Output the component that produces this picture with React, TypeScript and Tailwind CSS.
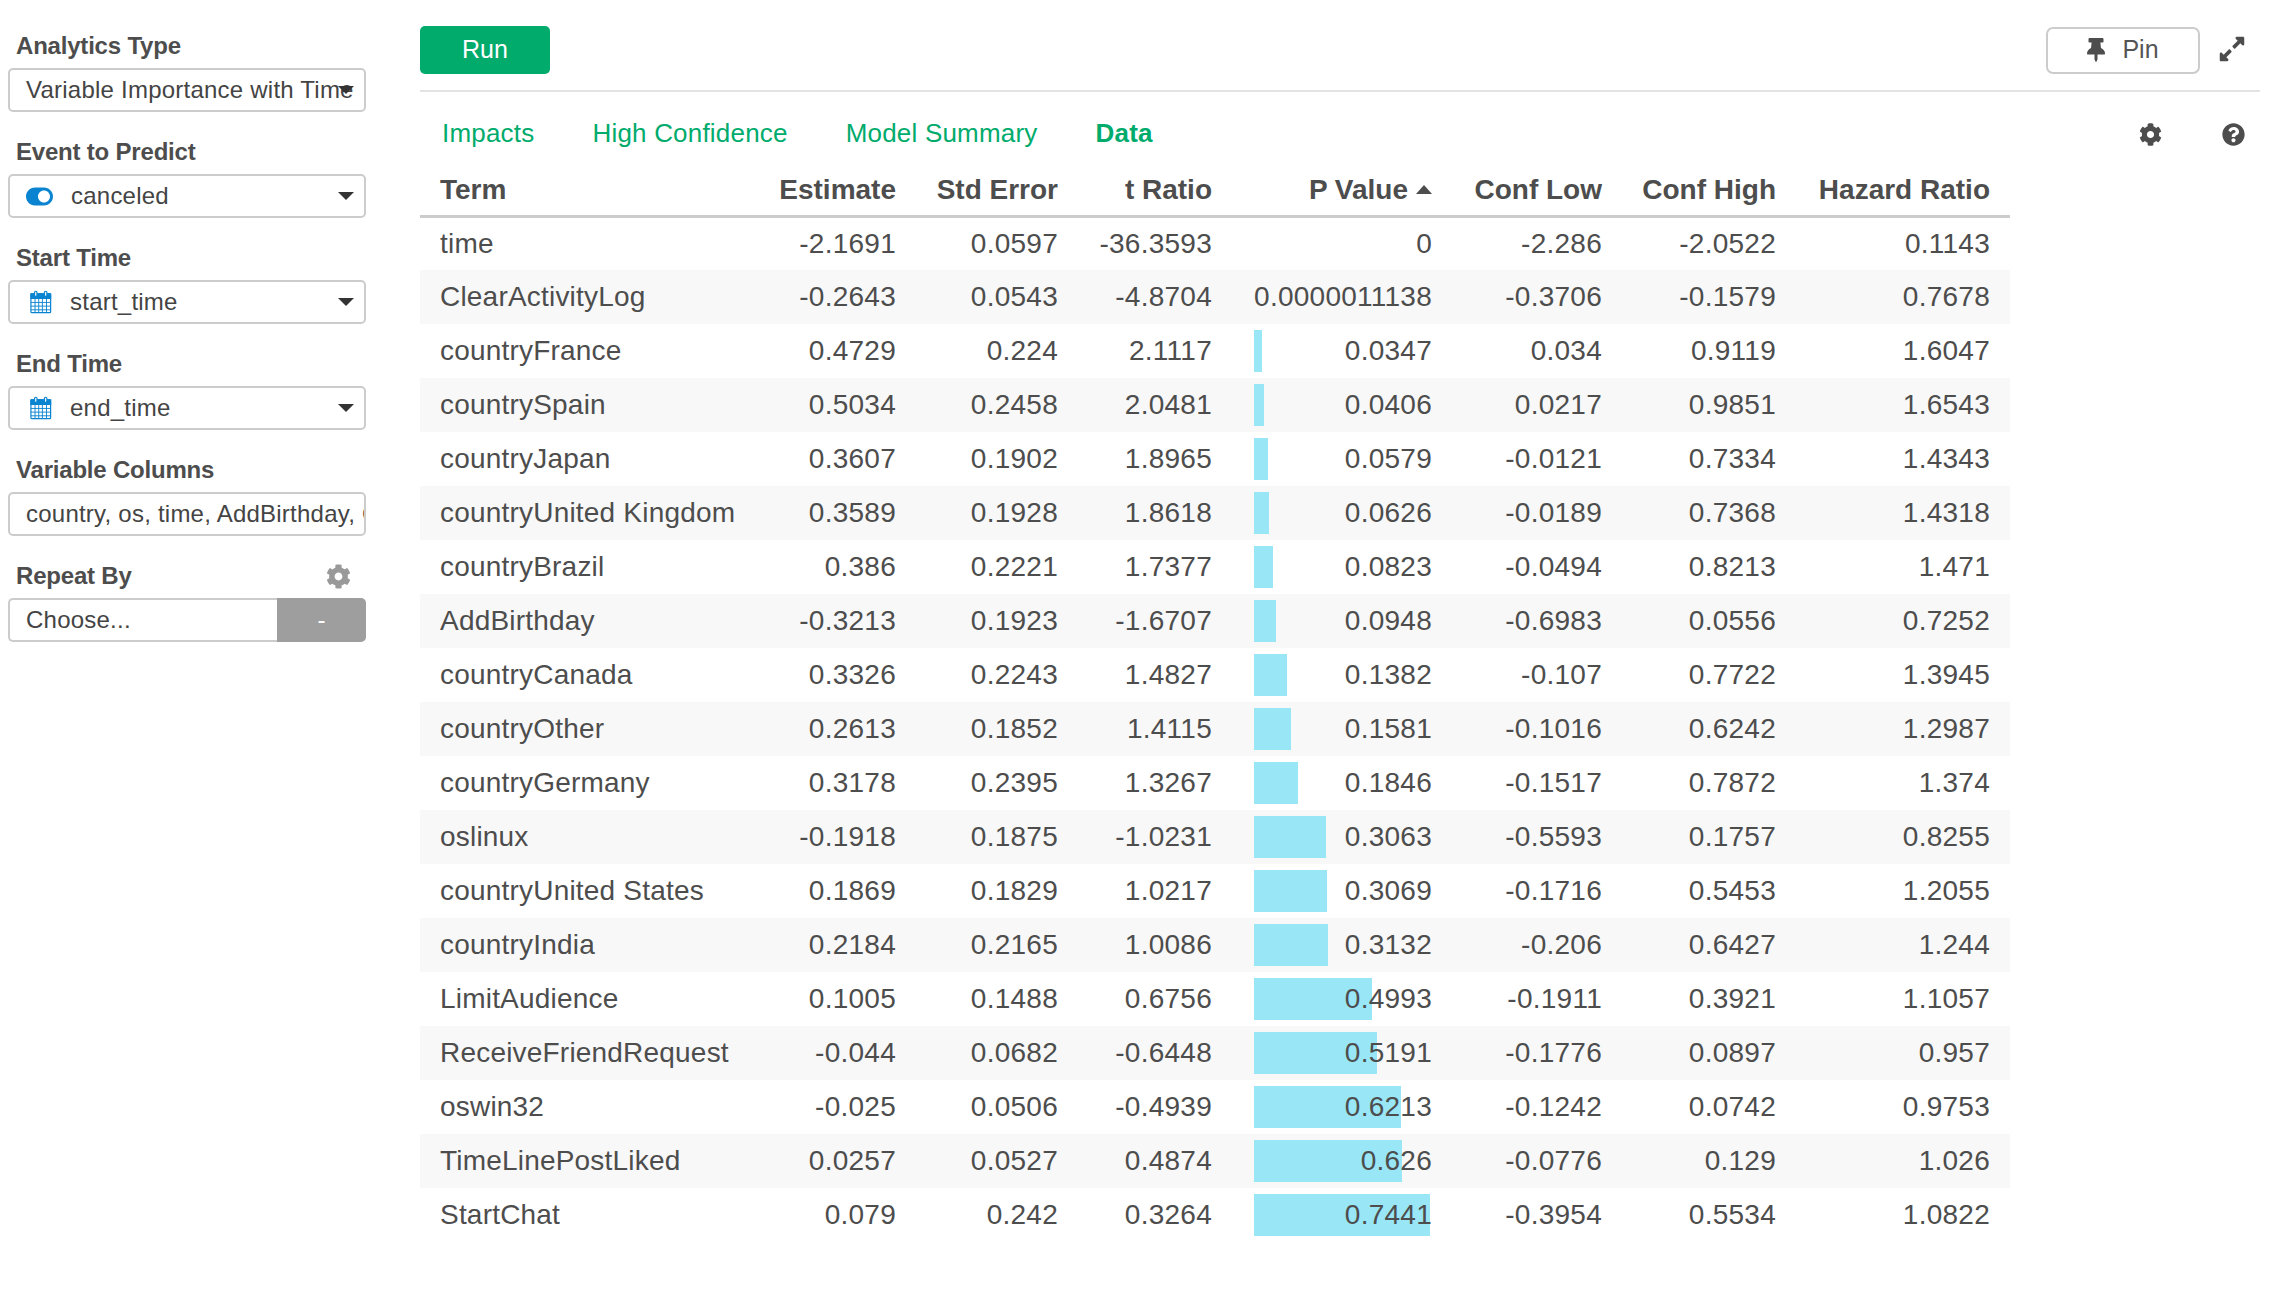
import React from 'react';
import { FaCog, FaExpandAlt, FaQuestionCircle, FaThumbtack, FaToggleOn } from 'react-icons/fa';

const rows: [string, string, string, string, string, string, string, string][] = [
  ["time", "-2.1691", "0.0597", "-36.3593", "0", "-2.286", "-2.0522", "0.1143"],
  ["ClearActivityLog", "-0.2643", "0.0543", "-4.8704", "0.0000011138", "-0.3706", "-0.1579", "0.7678"],
  ["countryFrance", "0.4729", "0.224", "2.1117", "0.0347", "0.034", "0.9119", "1.6047"],
  ["countrySpain", "0.5034", "0.2458", "2.0481", "0.0406", "0.0217", "0.9851", "1.6543"],
  ["countryJapan", "0.3607", "0.1902", "1.8965", "0.0579", "-0.0121", "0.7334", "1.4343"],
  ["countryUnited Kingdom", "0.3589", "0.1928", "1.8618", "0.0626", "-0.0189", "0.7368", "1.4318"],
  ["countryBrazil", "0.386", "0.2221", "1.7377", "0.0823", "-0.0494", "0.8213", "1.471"],
  ["AddBirthday", "-0.3213", "0.1923", "-1.6707", "0.0948", "-0.6983", "0.0556", "0.7252"],
  ["countryCanada", "0.3326", "0.2243", "1.4827", "0.1382", "-0.107", "0.7722", "1.3945"],
  ["countryOther", "0.2613", "0.1852", "1.4115", "0.1581", "-0.1016", "0.6242", "1.2987"],
  ["countryGermany", "0.3178", "0.2395", "1.3267", "0.1846", "-0.1517", "0.7872", "1.374"],
  ["oslinux", "-0.1918", "0.1875", "-1.0231", "0.3063", "-0.5593", "0.1757", "0.8255"],
  ["countryUnited States", "0.1869", "0.1829", "1.0217", "0.3069", "-0.1716", "0.5453", "1.2055"],
  ["countryIndia", "0.2184", "0.2165", "1.0086", "0.3132", "-0.206", "0.6427", "1.244"],
  ["LimitAudience", "0.1005", "0.1488", "0.6756", "0.4993", "-0.1911", "0.3921", "1.1057"],
  ["ReceiveFriendRequest", "-0.044", "0.0682", "-0.6448", "0.5191", "-0.1776", "0.0897", "0.957"],
  ["oswin32", "-0.025", "0.0506", "-0.4939", "0.6213", "-0.1242", "0.0742", "0.9753"],
  ["TimeLinePostLiked", "0.0257", "0.0527", "0.4874", "0.626", "-0.0776", "0.129", "1.026"],
  ["StartChat", "0.079", "0.242", "0.3264", "0.7441", "-0.3954", "0.5534", "1.0822"],
];

const Caret = () => (
  <span className="absolute right-[10px] top-[16px] h-0 w-0 border-x-[8px] border-t-[8px] border-x-transparent border-t-[#333]" />
);

const CalendarIcon = () => (
  <svg width="22" height="24" viewBox="0 0 24 25" className="ml-[4px] shrink-0" fill="none" stroke="#0a84d0" strokeWidth="1.3">
    <rect x="1" y="3.5" width="21.5" height="20.5" rx="1" />
    <path d="M1 3.5h21.5v5H1z" fill="#0a84d0" />
    <path d="M1 13h21.5M1 17h21.5M1 21h21.5M5.5 9v15M9.5 9v15M13.5 9v15M18 9v15" strokeWidth="1" />
    <rect x="5" y="0.8" width="2.6" height="5.5" rx="1.2" fill="#fff" />
    <rect x="15.8" y="0.8" width="2.6" height="5.5" rx="1.2" fill="#fff" />
  </svg>
);

const Field = ({ label, children }: { label: string; children: React.ReactNode }) => (
  <div className="h-[106px]">
    <div className="mb-[2px] flex h-[40px] items-center pl-[8px] text-[24px] font-bold tracking-[-0.2px] text-[#4d4d4d]">{label}</div>
    {children}
  </div>
);

const SelectBox = ({ icon, text }: { icon?: React.ReactNode; text: string }) => (
  <div className="relative flex h-[44px] items-center gap-[18px] overflow-hidden whitespace-nowrap rounded-[5px] border-2 border-[#ccc] bg-white pl-[16px] text-[24px] tracking-[0.23px] text-[#444]">
    {icon}
    <span>{text}</span>
    <Caret />
  </div>
);

const App = () => {
  const numCell = "pr-5 text-right";
  return (
    <div className="flex h-[1314px] w-[2272px] bg-white font-['Liberation_Sans',Arial,sans-serif] text-[28px] tracking-[0.25px] text-[#4d4d4d]">
      <aside className="ml-[8px] w-[358px] shrink-0 pt-[26px]">
        <Field label="Analytics Type">
          <SelectBox text="Variable Importance with Time" />
        </Field>
        <Field label="Event to Predict">
          <SelectBox icon={<FaToggleOn className="h-[27px] w-[27px] text-[#0a84d0]" />} text="canceled" />
        </Field>
        <Field label="Start Time">
          <SelectBox icon={<CalendarIcon />} text="start_time" />
        </Field>
        <Field label="End Time">
          <SelectBox icon={<CalendarIcon />} text="end_time" />
        </Field>
        <Field label="Variable Columns">
          <div className="flex h-[44px] items-center overflow-hidden whitespace-nowrap rounded-[5px] border-2 border-[#ccc] bg-white pl-[16px] text-[24px] tracking-[0.23px] text-[#444]">
            country, os, time, AddBirthday, ClearActivityLog
          </div>
        </Field>
        <div>
          <div className="mb-[2px] flex h-[40px] items-center justify-between pl-[8px] pr-[15px] text-[24px] font-bold tracking-[-0.2px] text-[#4d4d4d]">
            Repeat By
            <FaCog className="h-[25px] w-[25px] text-[#999]" />
          </div>
          <div className="flex h-[44px] text-[24px] tracking-[0.23px]">
            <div className="flex flex-1 items-center rounded-l-[5px] border-2 border-r-0 border-[#ccc] pl-[16px] text-[#444]">Choose...</div>
            <div className="flex w-[89px] items-center justify-center rounded-r-[5px] bg-[#9e9e9e] text-white">-</div>
          </div>
        </div>
      </aside>
      <main className="ml-[54px] w-[1840px] pt-[26px]">
        <div className="flex h-[48px] items-center justify-between">
          <button className="h-[48px] w-[130px] rounded-[5px] bg-[#00ab6c] text-[25px] tracking-normal text-white">Run</button>
          <div className="flex items-center gap-[18px] pr-[14px]">
            <button className="flex h-[47px] w-[154px] items-center justify-center gap-[17px] rounded-[7px] border-2 border-[#ccc] text-[25px] tracking-normal text-[#555]">
              <FaThumbtack className="h-[24px] w-[18px] text-[#4d4d4d]" />
              Pin
            </button>
            <FaExpandAlt className="-mt-[2px] h-[28px] w-[28px] text-[#4d4d4d]" />
          </div>
        </div>
        <div className="mt-[16px] h-[2px] bg-[#e3e3e3]" />
        <div className="relative flex h-[73px] items-center pl-[22px] pt-[9px] text-[26px] tracking-[0.2px] text-[#00ab6c]">
          <span>Impacts</span>
          <span className="ml-[58px]">High Confidence</span>
          <span className="ml-[58px]">Model Summary</span>
          <span className="ml-[58px] font-bold">Data</span>
          <FaCog className="absolute left-[1719px] top-[31px] h-[23px] w-[23px] text-[#4d4d4d]" />
          <FaQuestionCircle className="absolute left-[1802px] top-[31px] h-[23px] w-[23px] text-[#4d4d4d]" />
        </div>
        <table className="w-[1590px] table-fixed border-collapse">
          <thead>
            <tr className="h-[51px] border-b-[3px] border-[#ccc] text-[28px] font-bold tracking-normal">
              <th className="w-[340px] pl-5 pt-[1px] text-left">Term</th>
              <th className="w-[156px] pr-5 pt-[1px] text-right">Estimate</th>
              <th className="w-[162px] pr-5 pt-[1px] text-right">Std Error</th>
              <th className="w-[154px] pr-5 pt-[1px] text-right">t Ratio</th>
              <th className="w-[220px] pr-5 pt-[1px] text-right">
                P Value
                <span className="mb-[4px] ml-[8px] inline-block h-0 w-0 border-x-[8px] border-b-[9px] border-x-transparent border-b-[#4d4d4d] align-middle" />
              </th>
              <th className="w-[170px] pr-5 pt-[1px] text-right">Conf Low</th>
              <th className="w-[174px] pr-5 pt-[1px] text-right">Conf High</th>
              <th className="w-[214px] pr-5 pt-[1px] text-right">Hazard Ratio</th>
            </tr>
          </thead>
          <tbody>
            {rows.map((r, i) => (
              <tr key={r[0]} className={i % 2 === 1 ? "h-[54px] bg-[#f8f8f8]" : "h-[54px] bg-white"}>
                <td className="whitespace-nowrap pl-5 tracking-[0.2px]">{r[0]}</td>
                <td className={numCell}>{r[1]}</td>
                <td className={numCell}>{r[2]}</td>
                <td className={numCell}>{r[3]}</td>
                <td className="relative pr-5 text-right">
                  <div
                    className="absolute left-[22px] top-[6px] h-[42px] bg-[#98e6f6]"
                    style={{ width: `${Number(r[4]) * 236.5}px` }}
                  />
                  <span className="relative">{r[4]}</span>
                </td>
                <td className={numCell}>{r[5]}</td>
                <td className={numCell}>{r[6]}</td>
                <td className={numCell}>{r[7]}</td>
              </tr>
            ))}
          </tbody>
        </table>
      </main>
    </div>
  );
};

export default App;
